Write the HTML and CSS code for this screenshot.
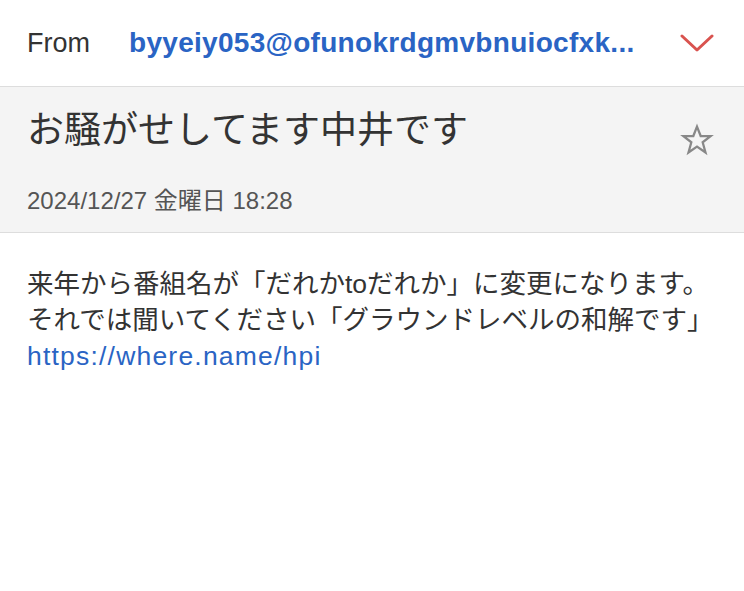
FILE: index.html
```html
<!DOCTYPE html>
<html lang="ja">
<head>
<meta charset="utf-8">
<link rel="stylesheet" href="styles.css">
</head>
<body>
<div class="page">
  <header class="from-row">
    <span class="from-label">From</span>
    <span class="from-addr">byyeiy053@ofunokrdgmvbnuiocfxk...</span>
    <svg class="chevron" width="34" height="20" viewBox="0 0 34 20"><polyline points="2,3 17,17 32,3" fill="none" stroke="#d9534f" stroke-width="3" stroke-linecap="round" stroke-linejoin="round"/></svg>
  </header>
  <section class="subject-box">
    <div class="subject-row">
      <h1 class="subject">お騒がせしてます中井です</h1>
      <svg class="star" width="34" height="34" viewBox="0 0 24 24"><polygon points="12,2.5 14.6,9.2 21.6,9.2 16,13.6 18,20.8 12,16.6 6,20.8 8,13.6 2.4,9.2 9.4,9.2" fill="none" stroke="#888" stroke-width="1.6" stroke-linejoin="miter"/></svg>
    </div>
    <div class="date">2024/12/27 金曜日 18:28</div>
  </section>
  <main class="body">
    <p>来年から番組名が「だれかtoだれか」に変更になります。<br>それでは聞いてください「グラウンドレベルの和解です」<br><a class="link" href="#">https://where.name/hpi</a></p>
  </main>
</div>
</body>
</html>
```
FILE: styles.css
```css
html, body { margin: 0; padding: 0; background: #fff; }
body { font-family: "Liberation Sans", "Noto Sans CJK JP", sans-serif; color: #333; }
.page { width: 744px; }
.from-row {
  height: 86px;
  display: flex;
  align-items: center;
  padding: 0 30px 0 27px;
  border-bottom: 1px solid #ddd;
  box-sizing: content-box;
}
.from-label { font-size: 27px; color: #333; width: 102px; flex: none; }
.from-addr {
  font-size: 28px; font-weight: bold; color: #2a64c4;
  letter-spacing: 0.3px;
  width: 530px; flex: none;
  white-space: nowrap; overflow: hidden;
}
.chevron { margin-left: auto; }
.subject-box { background: #f4f4f4; padding: 20px 30px 16px 27px; border-bottom: 1px solid #ddd; height: 109px; }
.subject-row { display: flex; justify-content: space-between; align-items: flex-start; }
.subject { margin: 0; font-weight: normal; font-size: 37px; line-height: 48px; color: #333; }
.star { margin-top: 16px; }
.date { margin-top: 24px; font-size: 24px; color: #555; }
.body { padding: 33px 27px; }
.body p { margin: 0; font-size: 26.5px; line-height: 36px; color: #333; }
.link { color: #2a64c4; text-decoration: none; letter-spacing: 1.2px; }
```
